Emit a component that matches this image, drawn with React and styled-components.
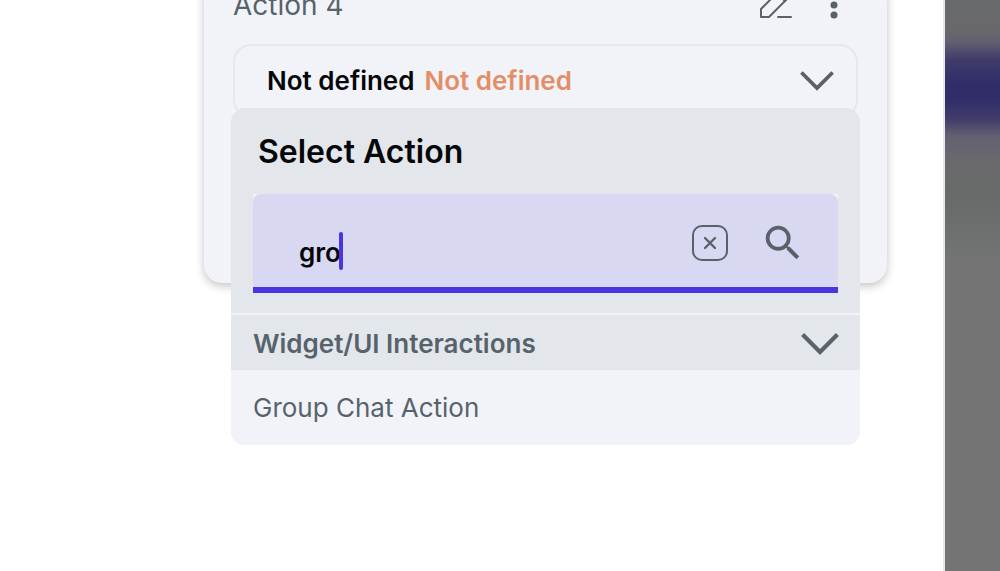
import React, { useState } from "react";
import styled, { createGlobalStyle } from "styled-components";
import { MdSearch } from "react-icons/md";

const colors = {
  surface: "#f2f3f8",
  panel: "#e3e7eb",
  line: "#e4e7eb",
  slate: "#57636c",
  icon: "#5a6168",
  text: "#060708",
  orange: "#e28f67",
  primary: "#4a35df",
  field: "#d9d8f3",
};

const GlobalStyle = createGlobalStyle`
* { box-sizing: border-box; }
body {
  margin: 0;
  background: #ffffff;
  overflow: hidden;
}
button, input {
  font: inherit;
  color: inherit;
  border: none;
  background: none;
  padding: 0;
  margin: 0;
}
button { cursor: pointer; text-align: left; }
svg { display: block; flex-shrink: 0; color: ${colors.icon}; }
`;

const Page = styled.div`
  display: flex;
  min-height: 100vh;
  font-family: Inter, "Liberation Sans", sans-serif;
  font-size: 26px;
  line-height: 32px;
  color: ${colors.slate};
`;

const Main = styled.main`
  flex: 1;
  min-width: 0;
  padding: 0 56px 0 204px;
  border-right: 2px solid #e6e9eb;
`;

const Scrim = styled.aside`
  width: 55px;
  background: linear-gradient(
    180deg,
    #68696b 0,
    #69696c 30px,
    #625f70 42px,
    #3f3b6a 60px,
    #302d69 84px,
    #302d69 100px,
    #413e6a 120px,
    #636071 136px,
    #69696c 160px,
    #686a69 195px,
    #707271 240px,
    #747474 270px,
    #747474 100%
  );
`;

/* the card is scrolled partly past the top edge */
const Card = styled.section`
  margin-top: -24px;
  height: 307px;
  padding: 0 29px;
  border-radius: 18px;
  background: ${colors.surface};
  box-shadow: 0 3px 10px rgba(0, 0, 0, 0.24);
`;

const CardHeader = styled.header`
  display: flex;
  align-items: center;
  height: 58px;
  padding-right: 6px;
  margin-bottom: 10px;
`;

const CardTitle = styled.h3`
  flex: 1;
  margin: 0;
  font-size: 28px;
  font-weight: 400;
`;

const IconButton = styled.button`
  display: flex;
  align-items: center;
  justify-content: center;
  width: ${(props) => props.$size || 36}px;
  height: ${(props) => props.$size || 36}px;
  margin-left: ${(props) => props.$gap || 0}px;
`;

const SelectWrapper = styled.div`
  position: relative;
`;

const SelectButton = styled.button`
  display: flex;
  align-items: center;
  gap: 10px;
  width: 100%;
  height: 74px;
  padding: 0 22px 0 32px;
  border: 2px solid ${colors.line};
  border-radius: 18px;
  font-weight: 600;
  color: ${colors.text};
`;

const SelectValue = styled.span`
  flex: 1;
  color: ${colors.orange};
`;

const Menu = styled.div`
  position: absolute;
  top: 64px;
  left: -2px;
  right: -2px;
  border-radius: 14px;
  overflow: hidden;
  background: ${colors.panel};
`;

const MenuTop = styled.div`
  padding: 24px 22px 20px;
  border-bottom: 2px solid ${colors.surface};
`;

const MenuTitle = styled.h2`
  margin: 0 0 22px;
  padding: 0 5px;
  font-size: 32px;
  line-height: 40px;
  font-weight: 600;
  color: ${colors.text};
`;

const FieldShell = styled.div`
  background: #f1f3f6;
`;

const Field = styled.label`
  display: flex;
  align-items: center;
  height: 99px;
  padding: 4px 32px 0 46px;
  border-radius: 8px 8px 0 0;
  border-bottom: 6px solid ${colors.primary};
  background: ${colors.field};
`;

const TextArea = styled.span`
  flex: 1;
  display: flex;
  align-items: center;
  padding-top: 20px;
`;

const SearchInput = styled.input`
  field-sizing: content;
  height: 40px;
  max-width: 300px;
  font-weight: 600;
  color: ${colors.text};
  caret-color: transparent;
  outline: none;
`;

const Caret = styled.span`
  width: 4px;
  height: 38px;
  margin-bottom: 4px;
  margin-left: -2px;
  border-radius: 2px;
  background: ${colors.primary};
`;

const CategoryButton = styled.button`
  display: flex;
  align-items: center;
  justify-content: space-between;
  width: 100%;
  height: 55px;
  padding: 2px 21px 0 22px;
  font-weight: 600;
`;

const ActionItem = styled.button`
  display: block;
  width: 100%;
  height: 75px;
  padding: 0 22px;
  background: ${colors.surface};
`;

const Chevron = ({ size }) => (
  <svg width={size} height={size} viewBox="0 0 36 36" fill="none" stroke="currentColor" strokeWidth="4">
    <path d="M1.5 9 18 25.5 34.5 9" />
  </svg>
);

const PencilIcon = () => (
  <svg width="34" height="34" viewBox="0 0 34 34" fill="none" stroke="currentColor" strokeWidth="2" strokeLinejoin="round" strokeLinecap="round">
    <path d="M2 29v-8L23 0l8 8-21 21Z" />
    <path d="m18 5 8 8" />
    <path d="M19 29h13" />
  </svg>
);

const DotsIcon = () => (
  <svg width="8" height="28" viewBox="0 0 8 28" fill="currentColor">
    <circle cx="4" cy="4" r="3.5" />
    <circle cx="4" cy="14" r="3.5" />
    <circle cx="4" cy="24" r="3.5" />
  </svg>
);

const ClearIcon = () => (
  <svg width="36" height="36" viewBox="0 0 36 36" fill="none" stroke="currentColor" strokeWidth="2">
    <rect x="1" y="1" width="34" height="34" rx="9" />
    <path d="m13 13 10 10M23 13 13 23" strokeWidth="2.4" strokeLinecap="round" />
  </svg>
);

const actions = [{ category: "Widget/UI Interactions", items: ["Group Chat Action"] }];

const App = () => {
  const [query, setQuery] = useState("gro");
  const [open, setOpen] = useState(true);

  return (
    <>
      <GlobalStyle />
      <Page>
        <Main>
          <Card>
            <CardHeader>
              <CardTitle>Action 4</CardTitle>
              <IconButton aria-label="Edit action">
                <PencilIcon />
              </IconButton>
              <IconButton aria-label="More options" $gap={22}>
                <DotsIcon />
              </IconButton>
            </CardHeader>
            <SelectWrapper>
              <SelectButton aria-expanded={open} onClick={() => setOpen(!open)}>
                <span>Not defined</span>
                <SelectValue>Not defined</SelectValue>
                <Chevron size={34} />
              </SelectButton>
              {open && (
                <Menu>
                  <MenuTop>
                    <MenuTitle>Select Action</MenuTitle>
                    <FieldShell>
                      <Field>
                        <TextArea>
                          <SearchInput
                            type="text"
                            aria-label="Search actions"
                            value={query}
                            onChange={(e) => setQuery(e.target.value)}
                          />
                          <Caret />
                        </TextArea>
                        <IconButton aria-label="Clear search" onClick={() => setQuery("")}>
                          <ClearIcon />
                        </IconButton>
                        <IconButton aria-label="Search" $size={46} $gap={32}>
                          <MdSearch size={46} />
                        </IconButton>
                      </Field>
                    </FieldShell>
                  </MenuTop>
                  {actions.map(({ category, items }) => (
                    <div key={category}>
                      <CategoryButton>
                        {category}
                        <Chevron size={38} />
                      </CategoryButton>
                      {items
                        .filter((item) => item.toLowerCase().includes(query.toLowerCase()))
                        .map((item) => (
                          <ActionItem key={item}>{item}</ActionItem>
                        ))}
                    </div>
                  ))}
                </Menu>
              )}
            </SelectWrapper>
          </Card>
        </Main>
        <Scrim />
      </Page>
    </>
  );
};

export default App;
